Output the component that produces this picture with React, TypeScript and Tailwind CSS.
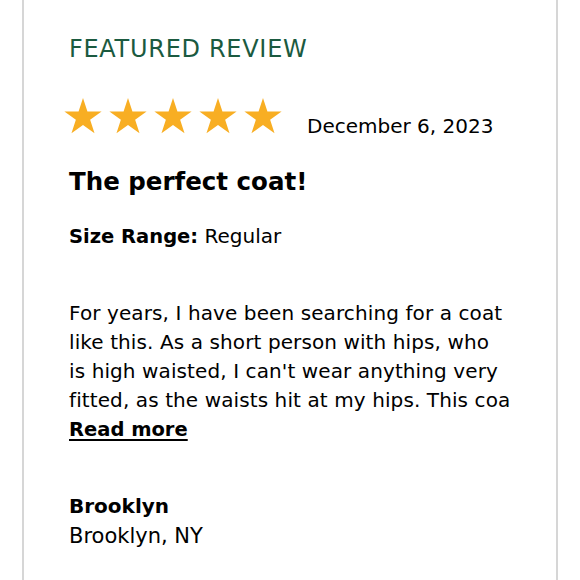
import React from "react";

function Star() {
  return (
    <svg width="38" height="36" viewBox="0 0 24 23" className="shrink-0">
      <path
        d="M12 0l2.83 8.6h9.05l-7.32 5.32 2.8 8.6L12 17.2l-7.36 5.32 2.8-8.6L.12 8.6h9.05z"
        fill="#f8ae23"
      />
    </svg>
  );
}

const lines = [
  "For years, I have been searching for a coat",
  "like this. As a short person with hips, who",
  "is high waisted, I can't wear anything very",
  "fitted, as the waists hit at my hips. This coa",
];

export default function App() {
  return (
    <div className="w-[580px] h-[580px] bg-white overflow-hidden" style={{ fontFamily: '"DejaVu Sans", sans-serif' }}>
      <div className="ml-[22px] w-[536px] h-full border-x-2 border-[#d6d6d6] pl-[45px] pt-[34px] text-black">
        <h2 className="text-[24px] leading-[30px] text-[#1b5a40] tracking-[0.7px]">FEATURED REVIEW</h2>

        <div className="flex items-center mt-[28px] ml-[-5px]">
          <div className="flex gap-[7px]">
            <Star />
            <Star />
            <Star />
            <Star />
            <Star />
          </div>
          <span className="ml-[25px] mt-[20px] text-[20px] leading-[28px]">December 6, 2023</span>
        </div>

        <h1 className="mt-[25px] text-[24.5px] leading-[34px] font-bold">The perfect coat!</h1>

        <p className="mt-[23px] text-[20px] leading-[28px]">
          <span className="font-bold text-[19.5px]">Size Range:</span> Regular
        </p>

        <div className="mt-[48px] text-[20px] leading-[29px]">
          {lines.map((l) => (
            <div key={l} className="whitespace-nowrap tracking-[0.1px]">{l}</div>
          ))}
          <a href="#" className="block text-[19.5px] font-bold underline underline-offset-[3px] decoration-2">Read more</a>
        </div>

        <div className="mt-[47px] text-[20px] leading-[30px]">
          <div className="font-bold text-[20px]">Brooklyn</div>
          <div className="text-[21px]">Brooklyn, NY</div>
        </div>
      </div>
    </div>
  );
}
